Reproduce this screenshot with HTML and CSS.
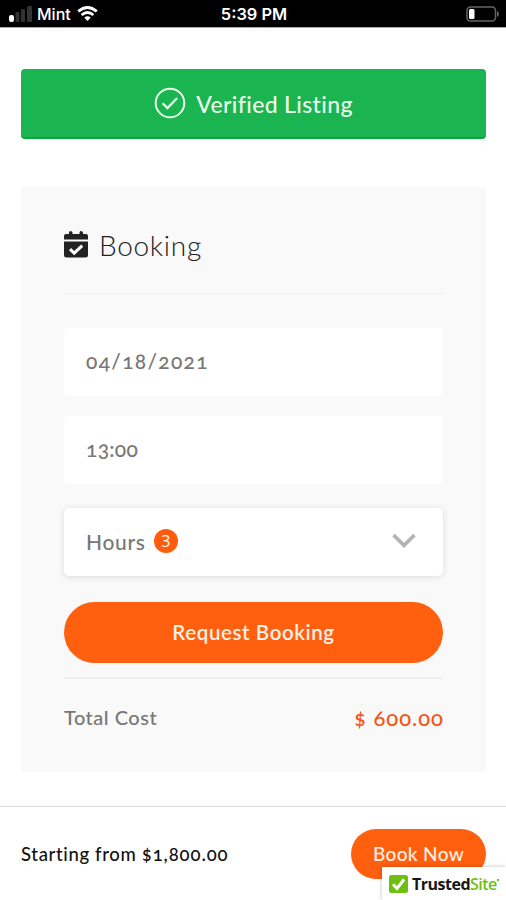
FILE: index.html
```html
<!DOCTYPE html>
<html lang="en">
<head>
<meta charset="utf-8">
<title>Booking</title>
<link rel="stylesheet" href="styles.css">
</head>
<body>
<div class="screen">
  <header class="status">
    <div class="carrier">
      <svg class="signal" width="24" height="16" viewBox="0 0 24 16"><rect x="0" y="9" width="5" height="7" rx="2" fill="#fff"/><rect x="6.500" y="6" width="4" height="10" rx="1" fill="#333"/><rect x="12" y="3" width="4" height="13" rx="1" fill="#333"/><rect x="18" y="0" width="5" height="16" rx="1" fill="#333"/></svg>
      <span class="network">Mint</span>
      <svg class="wifi" width="21" height="16" viewBox="0 0 21 16" fill="none" stroke="#fff" stroke-width="2.700"><path d="M1.200 5.400Q10.500-2.400 19.800 5.400"/><path d="M4.600 9Q10.500 4 16.400 9"/><path d="M7.300 11.700Q10.500 8.800 13.700 11.700L10.500 15Z" fill="#fff" stroke="none"/></svg>
    </div>
    <span class="clock">5:39 PM</span>
    <svg class="battery" width="33" height="16" viewBox="0 0 33 16"><rect x="1" y="1" width="28.500" height="14" rx="3.500" fill="none" stroke="#666" stroke-width="1.500"/><rect x="3" y="3" width="5.500" height="10" rx="1.500" fill="#fff"/><path d="M31 5q2 1 2 3t-2 3z" fill="#666"/></svg>
  </header>
  <main>
    <div class="verified">
      <svg width="32" height="32" viewBox="0 0 32 32" fill="none" stroke="#e9fbe9" stroke-width="2"><circle cx="16" cy="16" r="14.300"/><path d="M8.600 16.200l4.900 4.800 9.700-10" stroke-width="2.300"/></svg>
      <span>Verified Listing</span>
    </div>
    <section class="card">
      <h1 class="title">
        <svg width="24" height="27" viewBox="0 0 24 27"><path fill="#222" d="M2 3h3V1.500Q5 0 6.500 0T8.500 1.500V3h7V1.500Q15.500 0 17 0T19 1.500V3h3q2 0 2 2v3.500H0V5q0-2 2-2zM0 10.500h24V24q0 2.500-2.500 2.500h-19Q0 26.500 0 24z"/><path d="M6 18.200l4.200 4 8-7.500" fill="none" stroke="#fff" stroke-width="3"/></svg>
        <span>Booking</span>
      </h1>
      <div class="field date"><span class="text">04/18/2021</span></div>
      <div class="field time"><span class="text">13:00</span></div>
      <div class="field select">
        <span class="text">Hours</span><span class="count">3</span>
        <svg class="chevron" width="24" height="16" viewBox="0 0 24 16" fill="none" stroke="#b3b3b3" stroke-width="3.600"><path d="M1.500 2L12 12.400 22.500 2"/></svg>
      </div>
      <div class="request"><span>Request Booking</span></div>
      <div class="total"><span class="label">Total Cost</span><span class="price">$ 600.00</span></div>
    </section>
  </main>
  <footer class="bar">
    <span class="from">Starting from <span class="amount">$1,800.00</span></span>
    <div class="book"><span>Book Now</span></div>
    <div class="trusted">
      <svg width="19" height="18" viewBox="0 0 19 18"><rect width="19" height="18" rx="2.500" fill="#6fbe12"/><path d="M4 9.200l4 4.300 7-9" fill="none" stroke="#fff" stroke-width="3"/></svg>
      <span class="brand">Trusted<span class="site">Site</span><span class="dot"></span></span>
    </div>
  </footer>
</div>
</body>
</html>
```
FILE: styles.css
```css
* { box-sizing: border-box; }
body { margin: 0; background: #fff; font-family: Lato, sans-serif; font-variant-numeric: oldstyle-nums; }
svg { display: block; flex: none; }
span { white-space: nowrap; }
.screen { height: 900px; display: flex; flex-direction: column; overflow: hidden; }
.status { height: 28px; background: #000; color: #fff; display: grid; grid-template-columns: 1fr auto 1fr; align-items: center; padding: 0 7px 0 9px; font: 500 16px Inter, sans-serif; border-bottom: 1px solid #aaa; }
.carrier { display: flex; align-items: center; }
.network { margin: 0 7px 0 4px; font-size: 16px; }
.clock { font-weight: 600; font-size: 16.400px; }
.wifi { margin-left: -1px; }
.battery { justify-self: end; }
main { flex: 1; padding: 41px 20px 0 21px; }
.verified { height: 70px; background: #1ab451; border-radius: 4px; border-bottom: 2px solid #0aa53d; color: #e9fbe9; display: flex; align-items: center; justify-content: center; gap: 10px; font-size: 23px; font-weight: 500; letter-spacing: .35px; }
.verified span { padding-top: 2px; }
.card { margin-top: 48px; height: 585px; background: #f9f9f9; border-radius: 4px; padding: 0 43px; }
.title { margin: 0; height: 108px; padding-top: 9px; border-bottom: 2px solid #f2f2f2; display: flex; align-items: center; gap: 11px; font-size: 28px; font-weight: 300; letter-spacing: .7px; color: #222; }
.field { height: 68px; background: #fff; border-radius: 5px; padding: 0 22px 3px; display: flex; align-items: center; font-size: 21px; font-weight: 500; color: #777; }
.date { margin-top: 33px; letter-spacing: 1.300px; }
.time { margin-top: 20px; letter-spacing: .3px; }
.select { margin-top: 24px; padding-bottom: 2px; box-shadow: 0 1px 6px rgba(0,0,0,.12); }
.select .text { letter-spacing: .7px; }
.count { width: 24px; height: 24px; margin-left: 8px; border-radius: 50%; background: #ff5d0d; color: #fff; font: 500 16px/24px "Open Sans", sans-serif; text-align: center; }
.chevron { margin-left: auto; margin-right: 5px; }
.request { height: 61px; margin-top: 26px; padding-bottom: 2px; border-radius: 31px; background: #ff600f; color: #fff0e5; display: flex; align-items: center; justify-content: center; font-size: 20.500px; font-weight: 600; letter-spacing: .6px; }
.total { margin-top: 14px; border-top: 2px solid #eee; height: 78px; display: flex; justify-content: space-between; align-items: center; font-size: 20px; font-weight: 500; color: #777; letter-spacing: .5px; }
.price { color: #fa5212; font-size: 22px; letter-spacing: 1px; margin-right: -1px; }
.bar { position: relative; height: 94px; border-top: 1px solid #ddd; padding: 0 20px 0 21px; display: flex; justify-content: space-between; align-items: center; }
.from { font-size: 18.500px; font-weight: 500; letter-spacing: .65px; color: #111; }
.amount { letter-spacing: .9px; }
.book { width: 135px; height: 50px; border-radius: 25px; background: #ff600f; color: #fff0e5; display: flex; align-items: center; justify-content: center; font-size: 19px; font-weight: 500; letter-spacing: .35px; }
.trusted { position: absolute; right: 0; bottom: 0; width: 124px; height: 33px; background: #fff; box-shadow: 0 0 4px rgba(0,0,0,.25); display: flex; align-items: center; gap: 4px; padding-left: 7px; }
.brand { display: flex; font: 700 16px "Open Sans", sans-serif; letter-spacing: -.5px; color: #171717; }
.site { font-weight: 600; color: #6fbe12; }
.dot { width: 2px; height: 2px; margin-top: 6px; background: #6fbe12; }
```
